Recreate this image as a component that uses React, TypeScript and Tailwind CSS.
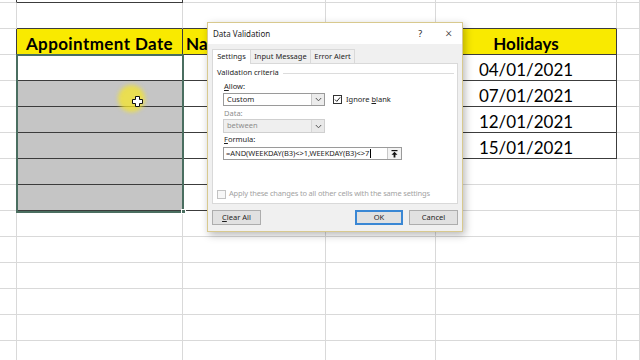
import React from "react";

const ROWS = 15;
// column widths: A, B, C, D, E, F
const COLS = [17, 166, 143, 110, 181, 23];

const DATES = ["04/01/2021", "07/01/2021", "12/01/2021", "15/01/2021"];

function isTable(r: number, c: number) {
  if (c === 1 && r >= 0 && r <= 8 && r !== 1) return true;
  if (c === 2 && r >= 2 && r <= 8) return true;
  if (c === 4 && r >= 2 && r <= 6) return true;
  return false;
}

function Cell({ r, c }: { r: number; c: number }) {
  const darkR = isTable(r, c) || isTable(r, c + 1);
  const darkB = isTable(r, c) || isTable(r + 1, c);
  const yellow = r === 2 && (c === 1 || c === 2 || c === 4);
  const gray = c === 1 && r >= 4 && r <= 8;

  let text: React.ReactNode = null;
  if (r === 2 && c === 1)
    text = <span className="tracking-[0.4px]">Appointment Date</span>;
  if (r === 2 && c === 2) text = "Na";
  if (r === 2 && c === 4) text = "Holidays";
  if (c === 4 && r >= 3 && r <= 6) text = DATES[r - 3];

  return (
    <div
      className={`flex items-end overflow-hidden whitespace-nowrap border-r border-b pb-[2px] font-['Lato',sans-serif] text-[17px] leading-none text-black ${
        darkR ? "border-r-[#3c3c3c]" : "border-r-[#d9d9d9]"
      } ${darkB ? "border-b-[#3c3c3c]" : "border-b-[#d9d9d9]"} ${
        yellow ? "bg-[#f9ea00] font-bold" : gray ? "bg-[#c5c5c5]" : "bg-white"
      } ${c === 2 ? "justify-start pl-[3px]" : "justify-center"}`}
    >
      {text}
    </div>
  );
}

function Chevron() {
  return (
    <svg width="7" height="5" viewBox="0 0 7 5" fill="none">
      <path d="M0.8 1 L3.5 3.8 L6.2 1" stroke="#555" strokeWidth="1" />
    </svg>
  );
}

function Combo({ value, disabled }: { value: string; disabled?: boolean }) {
  return (
    <div
      className={`ml-[6px] flex w-[102px] items-stretch border ${
        disabled
          ? "border-[#cfcfcf] bg-[#efefef] text-[#8d8d8d]"
          : "border-[#9a9a9a] bg-white text-[#1e1e1e]"
      }`}
    >
      <span className="flex flex-1 items-center pl-[3px]">{value}</span>
      <span
        className={`flex w-[13px] items-center justify-center border-l ${
          disabled ? "border-[#d6d6d6] bg-[#e9e9e9]" : "border-[#c8c8c8] bg-[#ececec]"
        }`}
      >
        <Chevron />
      </span>
    </div>
  );
}

function Dialog() {
  return (
    <div className="absolute left-[207px] top-[22px] flex h-[210px] w-[256px] flex-col border border-[#d8c98e] bg-[#f0f0f0] font-['Noto_Sans',sans-serif] text-[7.5px] leading-none text-[#1e1e1e] shadow-[2px_3px_8px_rgba(0,0,0,0.28)]">
      <div className="flex h-[21px] shrink-0 items-center bg-white pl-[5px] pr-[10px]">
        <span className="text-[8px]">Data Validation</span>
        <span className="ml-auto text-[9px]">?</span>
        <span className="ml-[23px] text-[12px] font-light">×</span>
      </div>
      <div className="px-[4px] pt-[4px]">
        <div className="flex h-[15px] items-end">
          <div className="relative z-10 -mb-px flex h-[15px] w-[39px] items-center justify-center border border-b-0 border-[#d9d9d9] bg-white">
            Settings
          </div>
          <div className="flex h-[14px] w-[60px] items-center justify-center border-t border-r border-[#d9d9d9] bg-[#f0f0f0]">
            Input Message
          </div>
          <div className="flex h-[14px] w-[44px] items-center justify-center border-t border-r border-[#d9d9d9] bg-[#f0f0f0]">
            Error Alert
          </div>
        </div>
        <div className="h-[141px] border border-[#d9d9d9] bg-white pl-[4px] pt-[3px]">
          <div className="flex h-[12px] items-center">
            <span>Validation criteria</span>
            <span className="ml-[4px] mr-[3px] h-px flex-1 bg-[#dcdcdc]" />
          </div>
          <div className="mt-[3px] flex h-[10px] items-center pl-[7px]">
            <span>
              <span className="underline">A</span>llow:
            </span>
          </div>
          <div className="mt-px flex h-[13px] items-stretch">
            <Combo value="Custom" />
            <div className="ml-[8px] flex items-center">
              <span className="flex h-[9px] w-[9px] items-center justify-center border border-[#333] bg-white">
                <svg width="7" height="7" viewBox="0 0 7 7" fill="none">
                  <path d="M1 3.6 L2.8 5.4 L6.2 1.3" stroke="#222" strokeWidth="1" />
                </svg>
              </span>
              <span className="ml-[4px]">
                Ignore <span className="underline">b</span>lank
              </span>
            </div>
          </div>
          <div className="mt-[3px] flex h-[10px] items-center pl-[7px] text-[#8d8d8d]">
            Data:
          </div>
          <div className="flex h-[14px] items-stretch">
            <Combo value="between" disabled />
          </div>
          <div className="mt-[2px] flex h-[10px] items-center pl-[7px]">
            <span>
              <span className="underline">F</span>ormula:
            </span>
          </div>
          <div className="ml-[6px] mt-[2px] flex h-[13px] w-[179px] items-stretch border border-[#9a9a9a] bg-white">
            <span className="flex flex-1 items-center pl-[2px] tracking-[-0.05px]">
              =AND(WEEKDAY(B3)&lt;&gt;1,WEEKDAY(B3)&lt;&gt;7
              <span className="ml-px h-[9px] w-px bg-black" />
            </span>
            <span className="flex w-[14px] items-center justify-center border-l border-[#c8c8c8] bg-[#f3f3f3]">
              <svg width="7" height="8" viewBox="0 0 7 8" fill="#111">
                <rect x="0.5" y="0" width="6" height="1.2" />
                <path d="M3.5 1.8 L6.5 4.8 L4.4 4.8 L4.4 7.6 L2.6 7.6 L2.6 4.8 L0.5 4.8 Z" />
              </svg>
            </span>
          </div>
          <div className="mt-[29px] flex h-[10px] items-center text-[#a3a3a3]">
            <span className="h-[9px] w-[9px] border border-[#c3c3c3] bg-[#f7f7f7]" />
            <span className="ml-[3px] tracking-[-0.18px]">
              Apply these changes to all other cells with the same settings
            </span>
          </div>
        </div>
      </div>
      <div className="mt-[6px] flex h-[15px] items-stretch px-[4px]">
        <div className="flex w-[49px] items-center justify-center border border-[#adadad] bg-[#e1e1e1]">
          <span>
            <span className="underline">C</span>lear All
          </span>
        </div>
        <div className="ml-auto flex w-[48px] items-center justify-center border-2 border-[#3a87d4] bg-[#e1e1e1]">
          OK
        </div>
        <div className="ml-[6px] flex w-[49px] items-center justify-center border border-[#adadad] bg-[#e1e1e1]">
          Cancel
        </div>
      </div>
    </div>
  );
}

export default function App() {
  const cells = [];
  for (let r = 0; r < ROWS; r++) {
    for (let c = 0; c < COLS.length; c++) {
      cells.push(<Cell key={`${r}-${c}`} r={r} c={c} />);
    }
  }
  return (
    <div className="relative h-[360px] w-[640px] overflow-hidden bg-white">
      <div className="-mt-[23px] grid auto-rows-[26px] grid-cols-[17px_166px_143px_110px_181px_1fr]">
        {cells}
      </div>

      {/* selection B3:B8 */}
      <div className="pointer-events-none absolute left-[16px] top-[54px] h-[159px] w-[168px] border-2 border-[#4a6e60]" />
      <div className="absolute left-[181px] top-[209px] h-[5px] w-[5px] border border-white bg-[#4a6e60]" />

      {/* cursor highlight */}
      <div className="absolute left-[118px] top-[85px] h-[27px] w-[27px] rounded-full bg-[#f5e52a]/75 blur-[2px]" />
      <svg
        className="absolute left-[132px] top-[96px]"
        width="11"
        height="11"
        viewBox="0 0 11 11"
      >
        <path
          d="M3.5 0.5 H7.5 V3.5 H10.5 V7.5 H7.5 V10.5 H3.5 V7.5 H0.5 V3.5 H3.5 Z"
          fill="#fff"
          stroke="#111"
          strokeWidth="1"
        />
      </svg>

      <Dialog />
    </div>
  );
}
